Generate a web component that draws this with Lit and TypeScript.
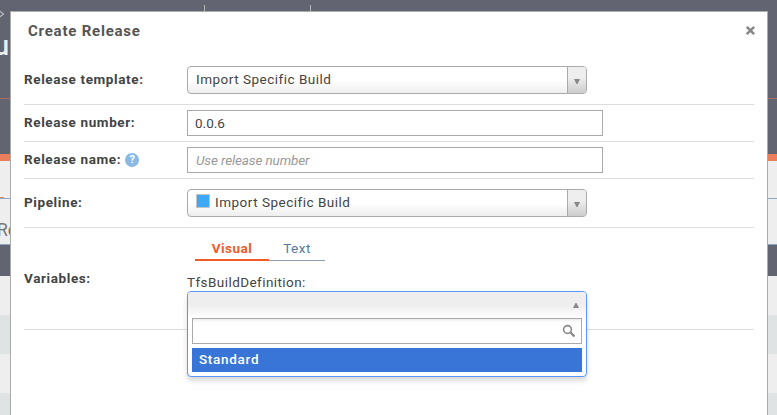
import { LitElement, html, css } from "lit";
import { customElement, property } from "lit/decorators.js";

@customElement("select-box")
class SelectBox extends LitElement {
  @property() label = "";
  @property({ type: Boolean }) swatch = false;

  static styles = css`
    :host { display: flex; box-sizing: border-box; width: 400px; height: 28px; border: 1px solid #aaa; border-radius: 4px;
      background: linear-gradient(to top, #eee 0%, #fff 50%); overflow: hidden; }
    .value { flex: 1; display: flex; align-items: center; padding-left: 8px; letter-spacing: 0.5px; padding-bottom: 2px; }
    .swatch { width: 12px; height: 12px; box-sizing: content-box; border: 1px solid #c0c4c8; background: #3fa9f5; margin: 0 5px 2px 0; }
    .arrow { width: 18px; border-left: 1px solid #aaa; background: linear-gradient(to top, #ccc 0%, #eee 60%);
      display: flex; align-items: center; justify-content: center; padding-top: 2px; }
    .arrow svg { margin-right: 1px; }
  `;

  render() {
    return html`
      <div class="value">${this.swatch ? html`<i class="swatch"></i>` : ""}<span>${this.label}</span></div>
      <div class="arrow"><svg width="6" height="5" viewBox="0 0 6 5"><path d="M0 0h6L3.5 5h-1z" fill="#888" /></svg></div>
    `;
  }
}

@customElement("app-root")
class AppRoot extends LitElement {
  static styles = css`
    :host { display: block; position: relative; width: 777px; height: 415px; overflow: hidden;
      font: 13.5px/18px Roboto, "Liberation Sans", sans-serif; color: #444; }
    .page { display: flex; flex-direction: column; height: 415px; background: #eee; }
    .page > div { flex-shrink: 0; }
    .top { height: 98px; background: #626571; position: relative; }
    .rule { height: 1px; background: #a56f66; }
    .nav { height: 55px; background: #626571; }
    .accent { height: 7px; background: #ea7e5b; }
    .tabsback { height: 37px; box-sizing: border-box; overflow: hidden; }
    .tabsback i { display: block; width: 4px; height: 1px; margin-top: 36px; background: #dd9068; }
    .blue { height: 1px; background: #8ea5bf; }
    .sub { height: 45px; overflow: hidden; font-size: 17.5px; line-height: 62px; color: #777; text-indent: -3px; }
    .head { height: 31px; background: #626571; }
    .stripe { height: 39px; background: #eee; }
    .stripe.alt { background: #dfe3e3; }
    .tick { position: absolute; top: 5px; width: 1px; height: 7px; background: #b5b5b8; }
    .t1 { left: 204px; } .t2 { left: 310px; }
    .chev { position: absolute; left: -2px; top: 10px; }
    .title-back { position: absolute; left: -6px; top: 31px; font-size: 27px; line-height: 31px; font-weight: 500; color: #eee; }

    .dialog { position: absolute; left: 10px; top: 11px; width: 758px; height: 420px; box-sizing: border-box;
      border: 1px solid #aaa; background: #fff; padding: 0 13px; }
    .bar { height: 44px; display: flex; align-items: center; justify-content: space-between; padding: 0 0 0 4px; box-sizing: border-box; }
    .bar h1 { margin: 0 0 7px; font-size: 15px; line-height: 18px; font-weight: 700; color: #555; letter-spacing: 0.78px; }
    .close { margin: 0 -2px 7px 0; display: block; }
    .row { display: flex; align-items: center; border-bottom: 1px solid #ddd; padding: 5px 0; }
    .row.tall { padding: 10px 0; }
    .label { width: 163px; font-weight: 700; letter-spacing: 0.61px; display: flex; align-items: center; gap: 4px; padding-bottom: 2px; box-sizing: border-box; }
    .help { width: 14px; height: 14px; border-radius: 50%; background: #8bb9e6; color: #fff; font-size: 11px; line-height: 14px;
      text-align: center; letter-spacing: 0; margin-top: 1px; }
    .input { box-sizing: border-box; width: 416px; height: 26px; border: 1px solid #aaa; padding: 3px 7px; background: #fff; }
    .hint { font-style: italic; color: #999; padding-left: 8px; letter-spacing: -0.13px; }
    .vars { height: 101px; align-items: stretch; padding: 0; }
    .vars .label { height: 101px; }
    .tabs { display: flex; margin: 11px 0 0 8px; height: 22px; letter-spacing: 0.5px; }
    .tab { box-sizing: border-box; text-align: center; }
    .tab.on { width: 74px; color: #f15a29; font-weight: 700; border-bottom: 2px solid #f15a29; }
    .tab.off { width: 56px; color: #5578a0; border-bottom: 1px solid #8ba0b8; height: 22px; }
    .field { position: relative; width: 400px; }
    .name { height: 30px; padding-top: 12px; box-sizing: border-box; letter-spacing: 0.43px; }
    .drop { position: absolute; left: 0; top: 63px; box-sizing: border-box; width: 400px; height: 86px; border: 1px solid #5897fb;
      border-radius: 4px; background: #fff; box-shadow: 0 4px 5px rgba(0,0,0,.15); padding: 0 4px 4px; overflow: visible; }
    .current { height: 26px; margin: 0 -4px; border-radius: 3px 3px 0 0; background: linear-gradient(to bottom, #eee 50%, #fff 100%);
      display: flex; align-items: center; justify-content: flex-end; padding-right: 7px; box-sizing: border-box; }
    .current svg { margin-top: 1px; }
    .search { height: 26px; box-sizing: border-box; border: 1px solid #aaa; background: linear-gradient(to bottom, #eee 1%, #fff 15%);
      display: flex; align-items: center; justify-content: flex-end; padding-right: 5px; }
    .option { margin-top: 4px; height: 24px; box-sizing: border-box; background: #3875d7; color: #fff; padding: 2px 7px;
      font-weight: 500; letter-spacing: 0.7px; }
  `;

  render() {
    return html`
      <div class="page">
        <div class="top">
          <svg class="chev" width="7" height="8" viewBox="0 0 7 8"><path d="M1 0.5L5.5 4 1 7.5" fill="none" stroke="#b8bbc0" stroke-width="1.2" /></svg>
          <i class="tick t1"></i><i class="tick t2"></i>
          <span class="title-back">u</span>
        </div>
        <div class="rule"></div>
        <div class="nav"></div>
        <div class="accent"></div>
        <div class="tabsback"><i></i></div>
        <div class="blue"></div>
        <div class="sub">Re</div>
        <div class="blue"></div>
        <div class="head"></div>
        <div class="stripe"></div><div class="stripe alt"></div><div class="stripe"></div><div class="stripe alt"></div>
      </div>
      <div class="dialog">
        <div class="bar">
          <h1>Create Release</h1>
          <svg class="close" width="11" height="11" viewBox="0 0 11 11"><path d="M2.3 2.3l6.4 6.4M8.7 2.3L2.3 8.7" stroke="#888" stroke-width="2.8" stroke-linecap="square" transform="translate(.6 .6) scale(.89)" /></svg>
        </div>
        <div class="row tall"><div class="label">Release template:</div><select-box label="Import Specific Build"></select-box></div>
        <div class="row"><div class="label">Release number:</div><div class="input">0.0.6</div></div>
        <div class="row"><div class="label">Release name:<span class="help">?</span></div><div class="input hint">Use release number</div></div>
        <div class="row tall"><div class="label">Pipeline:</div><select-box swatch label="Import Specific Build"></select-box></div>
        <div class="row vars">
          <div class="label">Variables:</div>
          <div class="field">
            <div class="tabs"><div class="tab on">Visual</div><div class="tab off">Text</div></div>
            <div class="name">TfsBuildDefinition:</div>
            <div class="drop">
              <div class="current"><svg width="6" height="5" viewBox="0 0 6 5"><path d="M0 5h6L3.5 0h-1z" fill="#888" /></svg></div>
              <div class="search"><svg width="14" height="14" viewBox="0 0 14 14" fill="none" stroke="#888"><circle cx="5.5" cy="5.5" r="3.9" stroke-width="1.6" /><path d="M8.5 8.5l4 4" stroke-width="2.3" /></svg></div>
              <div class="option">Standard</div>
            </div>
          </div>
        </div>
      </div>
    `;
  }
}
